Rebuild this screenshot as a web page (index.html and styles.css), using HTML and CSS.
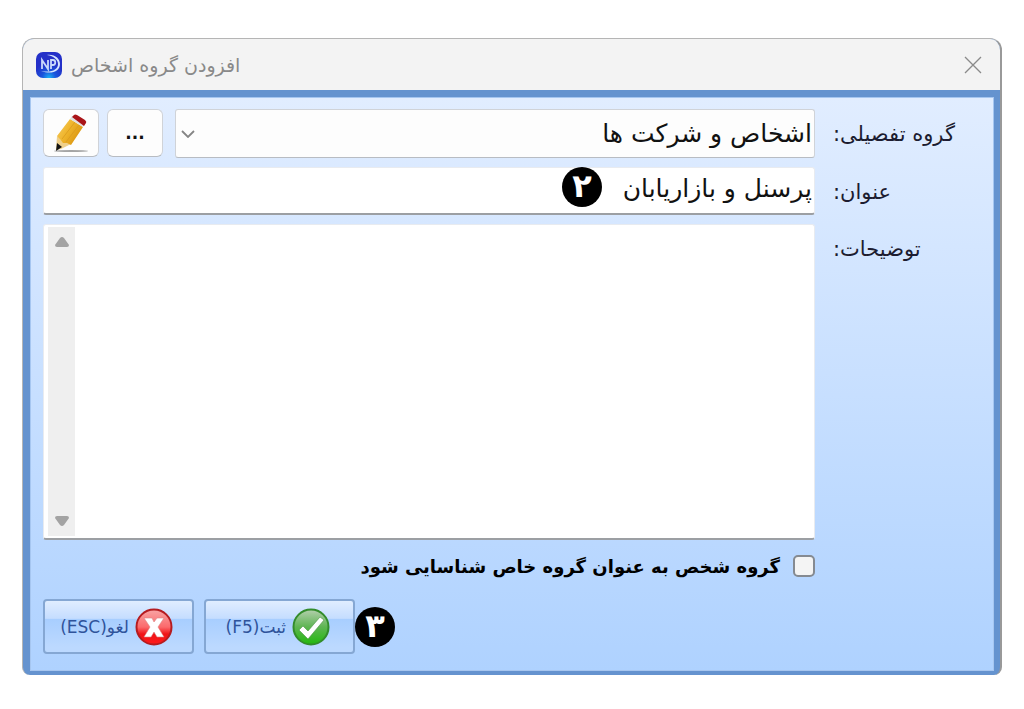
FILE: index.html
```html
<!DOCTYPE html>
<html lang="fa" dir="rtl">
<head>
    <meta charset="UTF-8">
    <meta name="viewport" content="width=device-width, initial-scale=1.0">
    <title>افزودن گروه اشخاص</title>
    <link rel="stylesheet" href="styles.css">
</head>
<body>
    <main class="dialog">
        <header class="titlebar">
            <button type="button" class="close" aria-label="بستن">
                <svg width="18" height="18" viewBox="0 0 18 18"><path d="M1 1L17 17M17 1L1 17" fill="none" stroke="#8a8a8a" stroke-width="1.3"/></svg>
            </button>
            <h1 class="title">افزودن گروه اشخاص</h1>
            <svg class="app-icon" width="28" height="28" viewBox="0 0 28 28">
                <defs>
                    <radialGradient id="appBg" cx="50%" cy="100%" r="60%">
                        <stop offset="0" stop-color="#1cb4f5"/>
                        <stop offset="0.45" stop-color="#1a55dc"/>
                        <stop offset="1" stop-color="#2430c8"/>
                    </radialGradient>
                </defs>
                <rect x="1" y="1" width="26" height="26" rx="7" fill="url(#appBg)"/>
                <path d="M12 4C20 3 25 8 25 13C25 20 17 24 6 20C16 22 23 19 23 13C23 9 19 5 12 4Z" fill="#d5e4ff"/>
                <path d="M7 18V9L13 18V9" fill="none" stroke="#c8d9fb" stroke-width="1.8"/>
                <path d="M16 18V9H18C21 9 21 14 18 14H16" fill="none" stroke="#c8d9fb" stroke-width="1.8"/>
            </svg>
        </header>

        <form class="form">
            <label class="label" for="group">گروه تفصیلی:</label>
            <div class="row">
                <div class="combo">
                    <select id="group">
                        <option>اشخاص و شرکت ها</option>
                    </select>
                    <svg class="chevron" width="14" height="8" viewBox="0 0 14 8"><path d="M1 1L7 7L13 1" fill="none" stroke="#858585" stroke-width="1.8"/></svg>
                </div>
                <button type="button" class="tool">...</button>
                <button type="button" class="tool" aria-label="ویرایش">
                    <svg width="40" height="42" viewBox="0 0 40 42">
                        <defs>
                            <linearGradient id="wood" x1="0" y1="0" x2="1" y2="0.6">
                                <stop offset="0" stop-color="#f6cf69"/>
                                <stop offset="0.5" stop-color="#efb52c"/>
                                <stop offset="1" stop-color="#d9930e"/>
                            </linearGradient>
                        </defs>
                        <ellipse cx="20" cy="39" rx="17" ry="1" fill="#a5a5a5"/>
                        <path d="M6 24L20 32L10 37L5 38Z" fill="#efd08b"/>
                        <path d="M6 24L19 7L32 15L20 33L16 31L12 31L9 27Z" fill="url(#wood)"/>
                        <path d="M11 27L24 10M15 30L28 13" stroke="#d99a20" stroke-width="0.8"/>
                        <path d="M19 7L21 4L34 12L32 15Z" fill="#e0e0e0"/>
                        <path d="M21 5L23 3Q24 2 26 3L34 8Q36 10 35 11L33 14Z" fill="#a91418"/>
                        <path d="M6 31L11 35L5 39Z" fill="#141414"/>
                    </svg>
                </button>
            </div>

            <label class="label" for="caption">عنوان:</label>
            <div class="field">
                <input type="text" id="caption" value="پرسنل و بازاریابان">
                <span class="badge badge-over">۲</span>
            </div>

            <label class="label" for="notes">توضیحات:</label>
            <div class="memo">
                <textarea id="notes"></textarea>
                <div class="scroll">
                    <svg width="14" height="10" viewBox="0 0 14 10"><path d="M5 1Q7 -1 9 1L14 8Q14 10 12 10H2Q0 10 0 8Z" fill="#a3a3a3"/></svg>
                    <svg width="14" height="10" viewBox="0 0 14 10"><path d="M5 9Q7 11 9 9L14 2Q14 0 12 0H2Q0 0 0 2Z" fill="#a3a3a3"/></svg>
                </div>
            </div>

            <div class="check">
                <input type="checkbox" id="special">
                <label for="special">گروه شخص به عنوان گروه خاص شناسایی شود</label>
            </div>

            <div class="actions">
                <span class="badge">۳</span>
                <button type="submit" class="action">
                    <svg width="38" height="40" viewBox="0 0 38 40">
                        <defs>
                            <linearGradient id="green" x1="0" y1="0" x2="0" y2="1">
                                <stop offset="0" stop-color="#b4cfae"/>
                                <stop offset="0.5" stop-color="#5eb552"/>
                                <stop offset="1" stop-color="#22b80d"/>
                            </linearGradient>
                        </defs>
                        <circle cx="19" cy="20" r="17.5" fill="url(#green)" stroke="#338c2b" stroke-width="2"/>
                        <path d="M7 23L11 19L16 24L28 10L32 13L16 32Z" fill="#fff" stroke="#4c9443" stroke-width="0.6"/>
                    </svg>
                    <span>ثبت(F5)</span>
                </button>
                <button type="button" class="action action-cancel">
                    <svg width="38" height="40" viewBox="0 0 38 40">
                        <defs>
                            <linearGradient id="red" x1="0" y1="0" x2="0" y2="1">
                                <stop offset="0" stop-color="#f8a5a5"/>
                                <stop offset="0.5" stop-color="#fb6a6c"/>
                                <stop offset="0.7" stop-color="#f01418"/>
                                <stop offset="1" stop-color="#ff1a1a"/>
                            </linearGradient>
                        </defs>
                        <circle cx="19" cy="20" r="17.5" fill="url(#red)" stroke="#b51c20" stroke-width="2"/>
                        <path d="M9 11H17L19 15L22 11H29L23 20L29 30H22L19 25L16 30H9L15 20Z" fill="#fff" stroke="#dc8585" stroke-width="0.6"/>
                    </svg>
                    <span>لغو(ESC)</span>
                </button>
            </div>
        </form>
    </main>
</body>
</html>
```

FILE: styles.css
```css
* {
    box-sizing: border-box;
}

body {
    margin: 0;
    padding: 38px 22px 34px 22px;
    background: #fff;
    color: #1c1c30;
    font-family: "DejaVu Sans", "Noto Sans", sans-serif;
    font-size: 21px;
}

button,
input,
select,
textarea {
    margin: 0;
    font-family: inherit;
    color: #111;
}

.dialog {
    border: 1px solid #b5b5b5;
    border-right: 2px solid #999;
    border-bottom: 0;
    border-radius: 12px 12px 8px 8px;
    background: #6593cf;
    overflow: hidden;
}

.titlebar {
    display: flex;
    align-items: center;
    height: 51px;
    padding: 0 18px 0 12px;
    background: #f3f3f3;
}

.title {
    margin: 0 auto 0 8px;
    color: #898989;
    font-size: 19px;
    font-weight: normal;
    line-height: 28px;
}

.close {
    display: flex;
    padding: 0;
    border: 0;
    background: transparent;
}

.form {
    display: grid;
    grid-template-columns: 162px 1fr;
    row-gap: 9px;
    margin: 7px 6px 4px 7px;
    padding: 11px 16px 16px 12px;
    border: 1px solid #a6c6f0;
    background: linear-gradient(#e1edff, #afd2ff);
}

.label {
    padding: 12px 0 0 0;
    margin-left: 18px;
    width: 144px;
    text-align: left;
    line-height: 26px;
}

.row {
    display: flex;
    gap: 8px;
}

.combo {
    position: relative;
    flex: 1;
    margin-left: 4px;
}

.combo select {
    width: 100%;
    height: 49px;
    padding: 0 2px;
    border: 1px solid #d0d3d8;
    border-bottom-color: #b8bcc2;
    border-radius: 3px;
    appearance: none;
    background: #fdfdfd;
    font-size: 25px;
}

.chevron {
    position: absolute;
    left: 6px;
    top: 21px;
    pointer-events: none;
}

.tool {
    display: flex;
    align-items: center;
    justify-content: center;
    width: 56px;
    height: 48px;
    padding: 0;
    border: 1px solid #d0d3d8;
    border-bottom-color: #b8bcc2;
    border-radius: 6px;
    background: #fdfdfd;
    font-size: 17px;
    font-weight: bold;
}

.field {
    position: relative;
}

.field input {
    display: block;
    width: 100%;
    height: 48px;
    padding: 0 2px 4px;
    border: 1px solid #e8ebf0;
    border-bottom: 2px solid #9c9fa3;
    border-radius: 3px;
    background: #fff;
    font-size: 25px;
}

.badge {
    display: flex;
    justify-content: center;
    width: 40px;
    height: 40px;
    border-radius: 50%;
    background: #000;
    color: #fff;
    font-size: 32px;
    font-weight: bold;
    line-height: 38px;
}

.badge-over {
    position: absolute;
    right: 213px;
    top: 0;
}

.memo {
    display: flex;
    height: 316px;
    padding: 2px 0 2px 4px;
    border: 1px solid #e8ebf0;
    border-bottom: 2px solid #9c9fa3;
    border-radius: 3px;
    background: #fff;
}

.memo textarea {
    flex: 1;
    border: 0;
    outline: 0;
    resize: none;
    background: transparent;
    font-size: 25px;
}

.scroll {
    display: flex;
    flex-direction: column;
    justify-content: space-between;
    align-items: center;
    width: 27px;
    padding: 10px 0;
    background: #efefef;
}

.check {
    grid-column: 2;
    display: flex;
    align-items: center;
    gap: 13px;
    height: 34px;
    color: #000;
    font-size: 18px;
    font-weight: bold;
}

.check input {
    width: 22px;
    height: 22px;
    border: 2px solid #858a91;
    border-radius: 5px;
    appearance: none;
    background: #f4f4f4;
}

.check input:checked {
    background: #2b5fb5;
}

.actions {
    grid-column: 2;
    display: flex;
    align-items: center;
    justify-content: flex-end;
    margin-top: 7px;
}

.action {
    display: flex;
    align-items: center;
    gap: 6px;
    width: 151px;
    height: 55px;
    padding: 0 23px 0 0;
    border: 2px solid #85a7d3;
    border-radius: 4px;
    background: linear-gradient(#e0edff, #c5ddff 34%, #a8ceff 36%, #bcd9ff 90%);
    color: #2f539b;
    font-size: 17px;
    white-space: nowrap;
}

.action-cancel {
    margin-right: 10px;
    padding-right: 19px;
}
```
